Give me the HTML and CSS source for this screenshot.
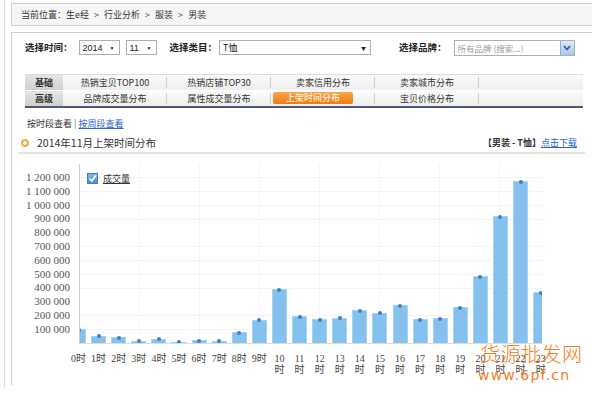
FILE: index.html
```html
<!DOCTYPE html>
<html lang="zh">
<head>
<meta charset="utf-8">
<title>上架时间分布</title>
<link rel="stylesheet" href="styles.css">
</head>
<body>
<div class="frame">
  <div class="crumb">当前位置：生e经 <span class="sep">&gt;</span> 行业分析 <span class="sep">&gt;</span> 服装 <span class="sep">&gt;</span> 男装</div>
  <div class="panel">
    <div class="filters">
      <span class="flabel">选择时间：</span>
      <span class="sel sel-year">2014<i class="arr">▼</i></span>
      <span class="sel sel-month">11<i class="arr">▼</i></span>
      <span class="flabel l-cat">选择类目：</span>
      <span class="sel sel-cat">T恤<i class="arr">▼</i></span>
      <span class="flabel l-brand">选择品牌：</span>
      <span class="brand"><span class="ph">所有品牌 (搜索...)</span><span class="btn"><svg width="8" height="6" viewBox="0 0 8 6"><polyline points="1,1 4,4.5 7,1" fill="none" stroke="#2a5a9a" stroke-width="1.6"/></svg></span></span>
    </div>

    <div class="tabs">
      <div class="trow">
        <div class="tlabel">基础</div>
        <div class="titem">热销宝贝TOP100</div>
        <div class="titem">热销店铺TOP30</div>
        <div class="titem">卖家信用分布</div>
        <div class="titem">卖家城市分布</div>
        <div class="titem"></div>
      </div>
      <div class="trow">
        <div class="tlabel">高级</div>
        <div class="titem">品牌成交量分布</div>
        <div class="titem">属性成交量分布</div>
        <div class="titem active"><span>上架时间分布</span></div>
        <div class="titem">宝贝价格分布</div>
        <div class="titem"></div>
      </div>
    </div>

    <div class="views">按时段查看 <span class="bar-sep">|</span> <a class="link">按周段查看</a></div>

    <div class="title">
      <div class="title-left"><span class="dot"></span><span class="title-text">2014年11月上架时间分布</span></div>
      <div class="title-right"><b>【男装 - T恤】</b><a class="link">点击下载</a></div>
    </div>

    <div class="chart">
      <div class="yaxis">
        <div>1 200 000</div><div>1 100 000</div><div>1 000 000</div><div>900 000</div>
        <div>800 000</div><div>700 000</div><div>600 000</div><div>500 000</div>
        <div>400 000</div><div>300 000</div><div>200 000</div><div>100 000</div>
      </div>
      <div class="plotcol">
        <div class="plot">
          <div class="legend"><span class="cb"><svg width="9" height="9" viewBox="0 0 9 9"><polyline points="1.5,4.5 3.8,7 7.8,1.5" fill="none" stroke="#fff" stroke-width="1.6"/></svg></span><span class="legend-text">成交量</span></div>
          <div class="bars">
            <div class="slot"><div class="bar" style="height:13.8px"></div></div>
            <div class="slot"><div class="bar" style="height:7.2px"></div></div>
            <div class="slot"><div class="bar" style="height:6px"></div></div>
            <div class="slot"><div class="bar" style="height:2.4px"></div></div>
            <div class="slot"><div class="bar" style="height:4.1px"></div></div>
            <div class="slot"><div class="bar" style="height:1.4px"></div></div>
            <div class="slot"><div class="bar" style="height:3px"></div></div>
            <div class="slot"><div class="bar" style="height:2.2px"></div></div>
            <div class="slot"><div class="bar" style="height:11px"></div></div>
            <div class="slot"><div class="bar" style="height:23.5px"></div></div>
            <div class="slot"><div class="bar" style="height:54px"></div></div>
            <div class="slot"><div class="bar" style="height:27px"></div></div>
            <div class="slot"><div class="bar" style="height:24px"></div></div>
            <div class="slot"><div class="bar" style="height:25.5px"></div></div>
            <div class="slot"><div class="bar" style="height:33px"></div></div>
            <div class="slot"><div class="bar" style="height:30.5px"></div></div>
            <div class="slot"><div class="bar" style="height:38px"></div></div>
            <div class="slot"><div class="bar" style="height:24px"></div></div>
            <div class="slot"><div class="bar" style="height:25px"></div></div>
            <div class="slot"><div class="bar" style="height:36px"></div></div>
            <div class="slot"><div class="bar" style="height:67px"></div></div>
            <div class="slot"><div class="bar" style="height:127px"></div></div>
            <div class="slot"><div class="bar" style="height:162px"></div></div>
            <div class="slot"><div class="bar" style="height:51px"></div></div>
          </div>
        </div>
        <div class="xlabels">
          <div class="xl"><span>0时</span></div><div class="xl"><span>1时</span></div>
          <div class="xl"><span>2时</span></div><div class="xl"><span>3时</span></div>
          <div class="xl"><span>4时</span></div><div class="xl"><span>5时</span></div>
          <div class="xl"><span>6时</span></div><div class="xl"><span>7时</span></div>
          <div class="xl"><span>8时</span></div><div class="xl"><span>9时</span></div>
          <div class="xl"><span>10时</span></div><div class="xl"><span>11时</span></div>
          <div class="xl"><span>12时</span></div><div class="xl"><span>13时</span></div>
          <div class="xl"><span>14时</span></div><div class="xl"><span>15时</span></div>
          <div class="xl"><span>16时</span></div><div class="xl"><span>17时</span></div>
          <div class="xl"><span>18时</span></div><div class="xl"><span>19时</span></div>
          <div class="xl"><span>20时</span></div><div class="xl"><span>21时</span></div>
          <div class="xl"><span>22时</span></div><div class="xl"><span>23时</span></div>
        </div>
      </div>
      <div class="watermark">
        <div class="wm-cn">货源批发网</div>
        <div class="wm-en">www.6pf.cn</div>
      </div>
    </div>
  </div>
</div>
</body>
</html>
```
FILE: styles.css
```css
html, body {
  margin: 0;
  padding: 0;
  background: #fff;
  overflow: hidden;
}
body {
  width: 592px;
  height: 400px;
  font-family: "Noto Sans CJK SC", "Liberation Sans", sans-serif;
  color: #333;
}
.frame {
  margin-left: 4px;
  border-left: 1px solid #dedede;
  padding-left: 6px;
  padding-top: 3px;
  height: 385px;
}
.crumb {
  height: 21px;
  line-height: 21px;
  border: 1px solid #cfcfcf;
  border-right: none;
  background: #f6f6f6;
  padding-left: 9px;
  font-size: 9px;
  color: #333;
}
.sep {
  margin: 0 3px;
  color: #555;
}
.panel {
  margin-top: 6px;
  border-top: 1px solid #cfcfcf;
  border-left: 1px solid #cfcfcf;
  height: 352px;
  padding-left: 13px;
  position: relative;
}

/* filters */
.filters {
  display: flex;
  align-items: center;
  padding-top: 7px;
  height: 15px;
}
.flabel {
  font-size: 9.5px;
  font-weight: bold;
  color: #222;
  line-height: 15px;
  white-space: nowrap;
}
.sel {
  box-sizing: border-box;
  height: 15px;
  border: 1px solid #a9b0b8;
  background: #fff;
  display: flex;
  align-items: center;
  justify-content: space-between;
  padding: 0 4px 0 3px;
  font-family: "Liberation Sans", "Noto Sans CJK SC", sans-serif;
  font-size: 9px;
  color: #222;
}
.arr {
  font-style: normal;
  font-size: 5px;
  color: #222;
}
.sel-year { margin-left: 6px; width: 41px; }
.sel-month { margin-left: 6px; width: 31px; }
.l-cat { margin-left: 13px; }
.sel-cat { margin-left: 2px; width: 152px; font-family: "Noto Sans CJK SC", sans-serif; }
.l-brand { margin-left: 28px; }
.brand {
  margin-left: 7px;
  box-sizing: border-box;
  width: 121px;
  height: 16px;
  border: 1px solid #a9b0b8;
  display: flex;
  align-items: center;
  justify-content: space-between;
  background: #fff;
}
.ph {
  font-size: 8.5px;
  color: #9a9a9a;
  padding-left: 3px;
  white-space: nowrap;
}
.btn {
  width: 13px;
  height: 14px;
  background: linear-gradient(#dbe8f8, #a9c6ea);
  border-left: 1px solid #8eaedb;
  display: flex;
  align-items: center;
  justify-content: center;
}

/* tabs */
.tabs {
  margin-top: 19px;
  width: 558px;
  border-top: 1px solid #dcdcdc;
  border-bottom: 2px solid #52577c;
}
.trow {
  display: grid;
  grid-template-columns: 38px repeat(5, 104px);
  height: 15px;
  background: linear-gradient(#fbfbfb, #eeeeee);
}
.trow + .trow {
  border-top: 1px solid #fff;
}
.tlabel {
  background: linear-gradient(#e4e4e4, #d0d0d0);
  font-size: 9px;
  font-weight: bold;
  color: #333;
  text-align: center;
  line-height: 15px;
}
.titem {
  position: relative;
  font-size: 9px;
  text-align: center;
  line-height: 15px;
  color: #333;
  white-space: nowrap;
}
.titem:not(:last-child)::after {
  content: "";
  position: absolute;
  right: 0;
  top: 2px;
  width: 1px;
  height: 11px;
  background: #cfcfcf;
}
.titem.active {
  text-align: left;
}
.titem.active span {
  display: inline-block;
  margin-left: 2px;
  margin-top: 1px;
  width: 80px;
  line-height: 12px;
  text-align: center;
  color: #fff;
  border-radius: 2px;
  background: linear-gradient(#f8a64a, #ee7c14);
  vertical-align: top;
}

/* view links */
.views {
  margin-top: 10px;
  padding-left: 2px;
  font-size: 9px;
  line-height: 12px;
  color: #333;
}
.bar-sep { color: #666; }
.link {
  color: #2a66c8;
  text-decoration: underline;
}

/* title */
.title {
  margin-top: 7px;
  margin-left: -7px;
  width: 567px;
  display: flex;
  justify-content: space-between;
  align-items: center;
  padding-bottom: 3px;
  border-bottom: 2px solid #e6e4df;
  height: 12px;
}
.title-left {
  display: flex;
  align-items: center;
}
.dot {
  margin-left: 3px;
  box-sizing: border-box;
  width: 8px;
  height: 8px;
  border-radius: 50%;
  border: 2px solid #e7ad4e;
  background: #fff5dc;
}
.title-text {
  margin-left: 8px;
  font-size: 10.5px;
  line-height: 12px;
  color: #333;
}
.title-right {
  font-size: 9px;
  line-height: 12px;
  padding-right: 8px;
  white-space: nowrap;
}
.title-right b { color: #333; }

/* chart */
.chart {
  margin-top: 10px;
  display: flex;
  position: relative;
}
.yaxis {
  width: 45px;
  padding-top: 7px;
  text-align: right;
  font-family: "Liberation Serif", "DejaVu Serif", serif;
  font-size: 11px;
  line-height: 13.8px;
  color: #555;
  white-space: nowrap;
}
.plotcol {
  margin-left: 9px;
}
.plot {
  position: relative;
  width: 462px;
  height: 179px;
  border-left: 1px solid #cfcfcf;
  border-bottom: 1px solid #dcdcdc;
  overflow: hidden;
  background:
    repeating-linear-gradient(to top, transparent 0 13px, #f1f3f6 13px 13.8px),
    repeating-linear-gradient(to right, transparent 0 59px, #f3f4f7 59px 60px);
}
.legend {
  position: absolute;
  left: 7px;
  top: 8px;
  display: flex;
  align-items: center;
  z-index: 2;
}
.cb {
  box-sizing: border-box;
  width: 11px;
  height: 11px;
  border: 1px solid #3d7fc2;
  background: linear-gradient(#7bb6ea, #4a90d6);
  display: flex;
  align-items: center;
  justify-content: center;
}
.legend-text {
  margin-left: 5px;
  font-size: 9px;
  color: #333;
  text-decoration: underline;
}
.bars {
  display: flex;
  align-items: flex-end;
  height: 100%;
  margin-left: -11.55px;
}
.slot {
  flex: none;
  width: 20.1px;
  height: 100%;
  display: flex;
  justify-content: center;
  align-items: flex-end;
}
.bar {
  position: relative;
  box-sizing: border-box;
  width: 15px;
  background: #84c1ef;
  border: 1px solid #a6d2f4;
  border-bottom: none;
}
.bar::before {
  content: "";
  position: absolute;
  left: 4.5px;
  top: -2.5px;
  width: 4px;
  height: 4px;
  border-radius: 50%;
  background: #3f7fc1;
}
.xlabels {
  display: flex;
  margin-left: -10.55px;
  margin-top: 9px;
}
.xl {
  flex: none;
  width: 20.1px;
  display: flex;
  justify-content: center;
}
.xl span {
  width: 18px;
  text-align: center;
  font-family: "Liberation Serif", "Noto Sans CJK SC", serif;
  font-size: 10px;
  line-height: 11px;
  color: #444;
}
.watermark {
  position: absolute;
  left: 455px;
  top: 178px;
  color: #f27c1e;
  z-index: 3;
}
.wm-cn {
  font-family: "Noto Sans CJK SC", sans-serif;
  font-weight: 300;
  font-size: 20px;
  line-height: 24px;
  letter-spacing: 0.5px;
}
.wm-en {
  font-family: "DejaVu Sans", sans-serif;
  font-size: 14px;
  line-height: 18px;
  letter-spacing: 1.2px;
  margin-left: -2px;
}
```
